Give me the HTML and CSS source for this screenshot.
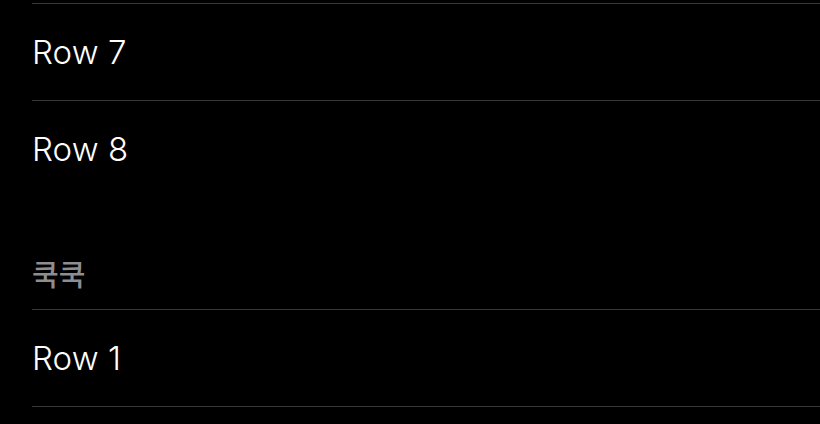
FILE: index.html
```html
<!DOCTYPE html>
<html lang="ko">

<head>
  <meta charset="UTF-8">
  <meta name="viewport" content="width=device-width, initial-scale=1.0">
  <title>List</title>
  <link rel="stylesheet" href="styles.css">
</head>

<body>
  <div class="list">
    <div class="section">
      <div class="row">Row 7</div>
      <div class="row">Row 8</div>
    </div>

    <div class="section">
      <div class="sectionHeader">쿡쿡</div>
      <div class="row">Row 1</div>
      <div class="row last"></div>
    </div>
  </div>
</body>

</html>
```

FILE: styles.css
```css
body {
  font-family: 'Inter', 'Noto Sans CJK KR', sans-serif;
  background-color: #000;
  color: #fff;
  margin: 0;
  padding: 0;
}

.list {
  padding-top: 3px;
  padding-left: 32px;
}

.row {
  display: flex;
  align-items: center;
  height: 96px;
  border-top: 1px solid #38383a;
  font-size: 33px;
  font-weight: 300;
  letter-spacing: 0.1px;
}

.row.last {
  height: 20px;
}

.sectionHeader {
  height: 112px;
  display: flex;
  align-items: flex-end;
  box-sizing: border-box;
  padding-bottom: 15px;
  font-family: 'Noto Sans CJK KR', sans-serif;
  font-size: 29px;
  font-weight: 500;
  color: #8d8d92;
}
```
